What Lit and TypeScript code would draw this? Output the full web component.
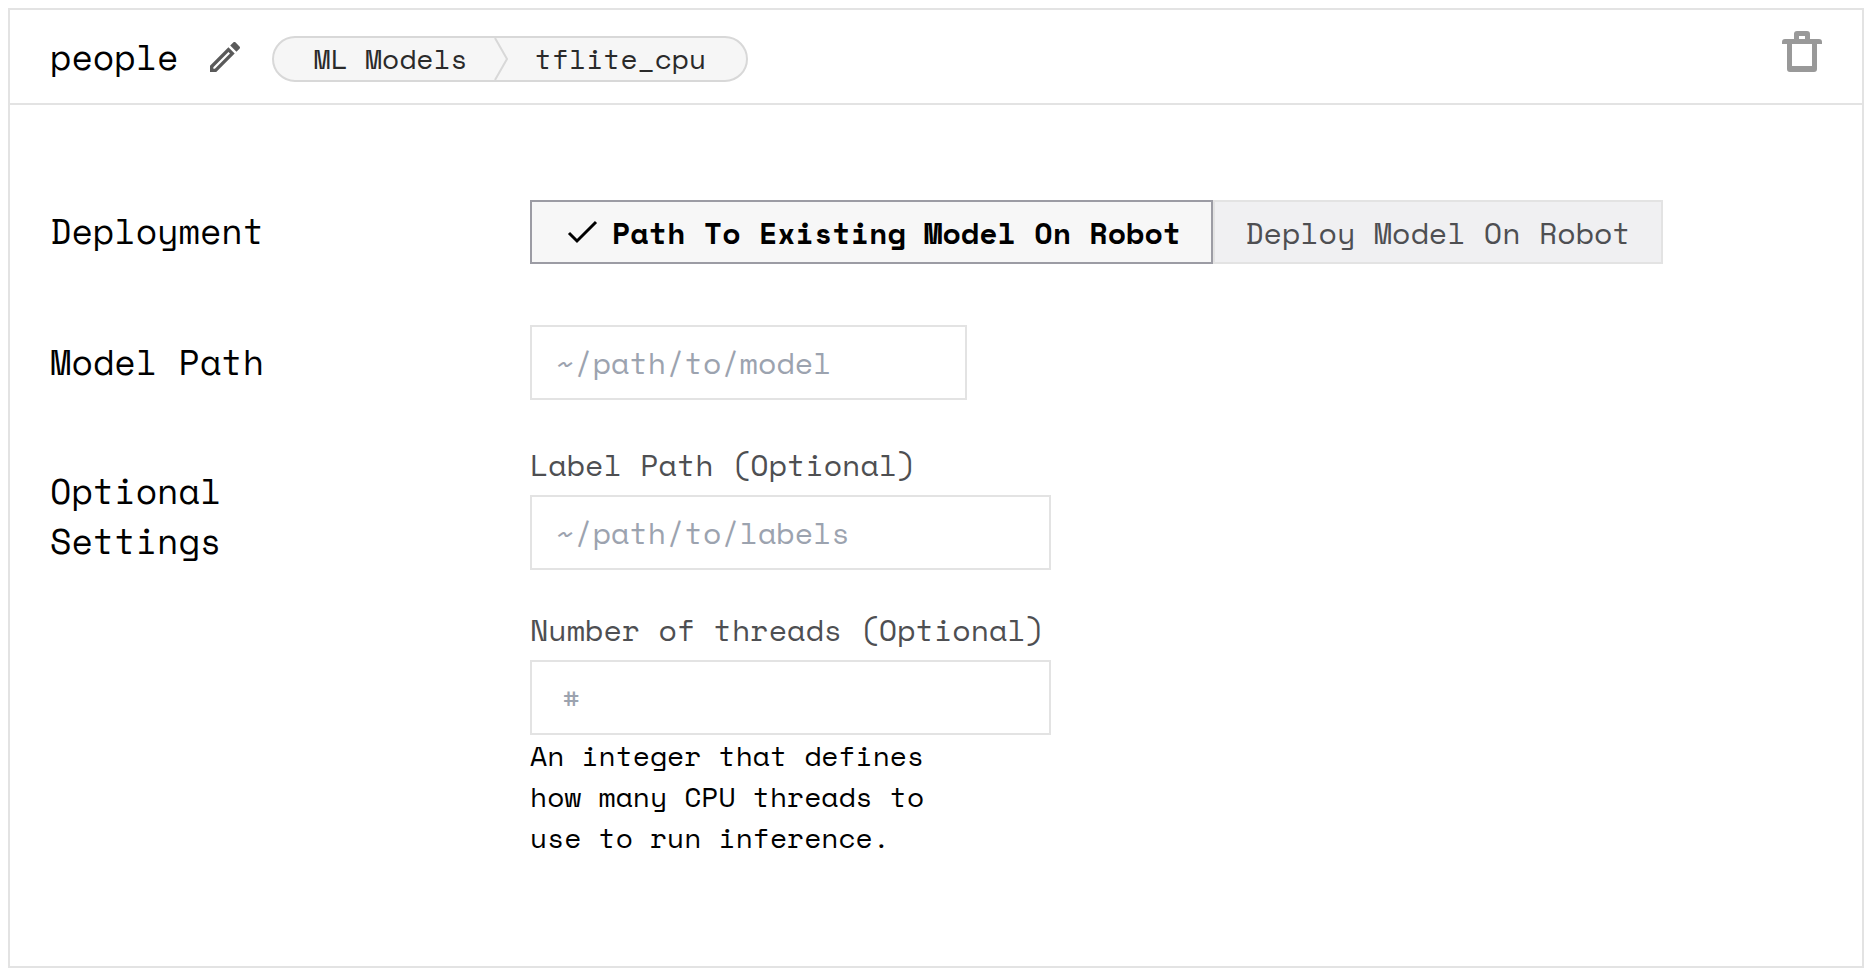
import { LitElement, html, css } from "lit";
import { customElement, state } from "lit/decorators.js";

type Deployment = "existing" | "deploy";

@customElement("app-root")
export class AppRoot extends LitElement {
  static styles = css`
    :host {
      display: block;
      padding: 8px 12px 12px 8px;
      background: #fff;
      color: #000;
      font-family: "Space Mono", "Liberation Mono", monospace;
    }
    * {
      box-sizing: border-box;
    }
    h1,
    h2,
    p,
    ol {
      margin: 0;
      padding: 0;
      font-weight: 400;
    }
    button,
    input {
      margin: 0;
      font: inherit;
      border-radius: 0;
    }
    svg {
      display: block;
      flex: none;
    }
    .card {
      border: 2px solid #e3e3e3;
    }
    .header {
      display: flex;
      align-items: center;
      padding: 5px 40px 0;
      height: 95px;
      border-bottom: 2px solid #e3e3e3;
    }
    .title {
      padding-bottom: 4px;
      font-size: 35px;
      line-height: 50px;
    }
    .icon-button {
      padding: 0;
      border: 0;
      background: none;
      cursor: pointer;
    }
    .edit {
      margin: 0 32px 4px 31px;
      color: #5a5a5a;
    }
    .trash {
      align-self: flex-start;
      margin: 16px 0 0 auto;
      color: #999;
    }
    .crumbs {
      display: flex;
      align-items: center;
      gap: 26px;
      height: 46px;
      padding: 0 40px;
      list-style: none;
      border: 2px solid #d8d8d8;
      border-radius: 23px;
      background: #f6f6f6;
      color: #2a2a2a;
      font-size: 28px;
      line-height: 42px;
      white-space: nowrap;
    }
    .separator {
      display: flex;
    }
    .body {
      padding: 95px 40px 108px;
    }
    .row {
      display: grid;
      grid-template-columns: 480px 1fr;
      align-items: center;
      margin-bottom: 61px;
    }
    .row.compact {
      margin-bottom: 44px;
    }
    .row.top {
      align-items: start;
      margin-bottom: 0;
    }
    .row-label {
      max-width: 320px;
      padding-bottom: 2px;
      font-size: 35px;
      line-height: 50px;
    }
    .top .row-label {
      padding-top: 22px;
    }
    .toggle {
      display: flex;
    }
    .option {
      display: flex;
      align-items: center;
      gap: 14px;
      height: 64px;
      padding: 0 30px;
      border: 2px solid #e3e3e3;
      background: #f0f0f2;
      color: #4e4f52;
      font-size: 30px;
      white-space: nowrap;
      cursor: pointer;
    }
    .option.selected {
      border-color: #9c9ca4;
      background: #f7f7f7;
      color: #000;
      font-weight: 700;
    }
    .fields {
      display: flex;
      flex-direction: column;
      gap: 39px;
      width: 521px;
    }
    .field-label {
      display: block;
      margin-bottom: 9px;
      color: #4e4f52;
      font-size: 30px;
      line-height: 42px;
      white-space: nowrap;
    }
    .input {
      display: block;
      width: 100%;
      height: 75px;
      padding: 0 24px;
      border: 2px solid #e3e3e3;
      background: #fff;
      color: #000;
      font-size: 30px;
    }
    .input.path {
      width: 437px;
    }
    .input.number {
      padding-left: 30px;
    }
    .input::placeholder {
      color: #9ca3af;
      opacity: 1;
    }
    .help {
      max-width: 410px;
      font-size: 28px;
      line-height: 41px;
    }
  `;

  @state() private deployment: Deployment = "existing";

  private option(value: Deployment, text: string) {
    const selected = this.deployment === value;
    return html`
      <button
        type="button"
        class="option ${selected ? "selected" : ""}"
        aria-pressed=${selected}
        @click=${() => (this.deployment = value)}
      >
        ${selected
          ? html`<svg width="36" height="42" viewBox="6 0 36 42" fill="none" stroke="currentColor" stroke-width="3" aria-hidden="true">
              <path d="M13 22l8 8 19-19" />
            </svg>`
          : null}
        <span>${text}</span>
      </button>
    `;
  }

  render() {
    return html`
      <section class="card">
        <header class="header">
          <h1 class="title">people</h1>
          <button type="button" class="icon-button edit" aria-label="Edit name">
            <svg width="30" height="30" viewBox="3 3 18 18" fill="currentColor" aria-hidden="true">
              <path
                d="M14.06 9l.94.94L5.92 19H5v-.92L14.06 9M17.66 3c-.25 0-.51.1-.7.29l-1.83 1.83 3.75 3.75 1.83-1.83c.39-.39.39-1.04 0-1.41l-2.34-2.34c-.2-.2-.45-.29-.71-.29m-3.6 3.19L3 17.25V21h3.75L17.81 9.94l-3.75-3.75z"
              />
            </svg>
          </button>
          <ol class="crumbs">
            <li>ML Models</li>
            <li class="separator" aria-hidden="true">
              <svg width="15" height="42" viewBox="0 0 15 42" fill="none" stroke="#d8d8d8" stroke-width="2">
                <path d="M1 0l12 21L1 42" />
              </svg>
            </li>
            <li>tflite_cpu</li>
          </ol>
          <button type="button" class="icon-button trash" aria-label="Delete">
            <svg width="40" height="41" viewBox="0 0 40 41" fill="currentColor" fill-rule="evenodd" aria-hidden="true">
              <path
                d="M12 8V3q0-3 3-3h10q3 0 3 3v5h9q3 0 3 3v2h-5v25q0 3-3 3H8q-3 0-3-3V13H0v-2q0-3 3-3zM17 5v3h6V5zM10 13v22h20V13z"
              />
            </svg>
          </button>
        </header>

        <div class="body">
          <div class="row">
            <h2 class="row-label" id="deployment">Deployment</h2>
            <div class="toggle" role="group" aria-labelledby="deployment">
              ${this.option("existing", "Path To Existing Model On Robot")}
              ${this.option("deploy", "Deploy Model On Robot")}
            </div>
          </div>

          <div class="row compact">
            <label class="row-label" for="model-path">Model Path</label>
            <input class="input path" id="model-path" type="text" placeholder="~/path/to/model" />
          </div>

          <div class="row top">
            <h2 class="row-label">Optional Settings</h2>
            <div class="fields">
              <div>
                <label class="field-label" for="label-path">Label Path (Optional)</label>
                <input class="input" id="label-path" type="text" placeholder="~/path/to/labels" />
              </div>
              <div>
                <label class="field-label" for="threads">Number of threads (Optional)</label>
                <input
                  class="input number"
                  id="threads"
                  type="text"
                  inputmode="numeric"
                  placeholder="#"
                  aria-describedby="threads-help"
                />
                <p class="help" id="threads-help">
                  An integer that defines how many CPU threads to use to run inference.
                </p>
              </div>
            </div>
          </div>
        </div>
      </section>
    `;
  }
}
